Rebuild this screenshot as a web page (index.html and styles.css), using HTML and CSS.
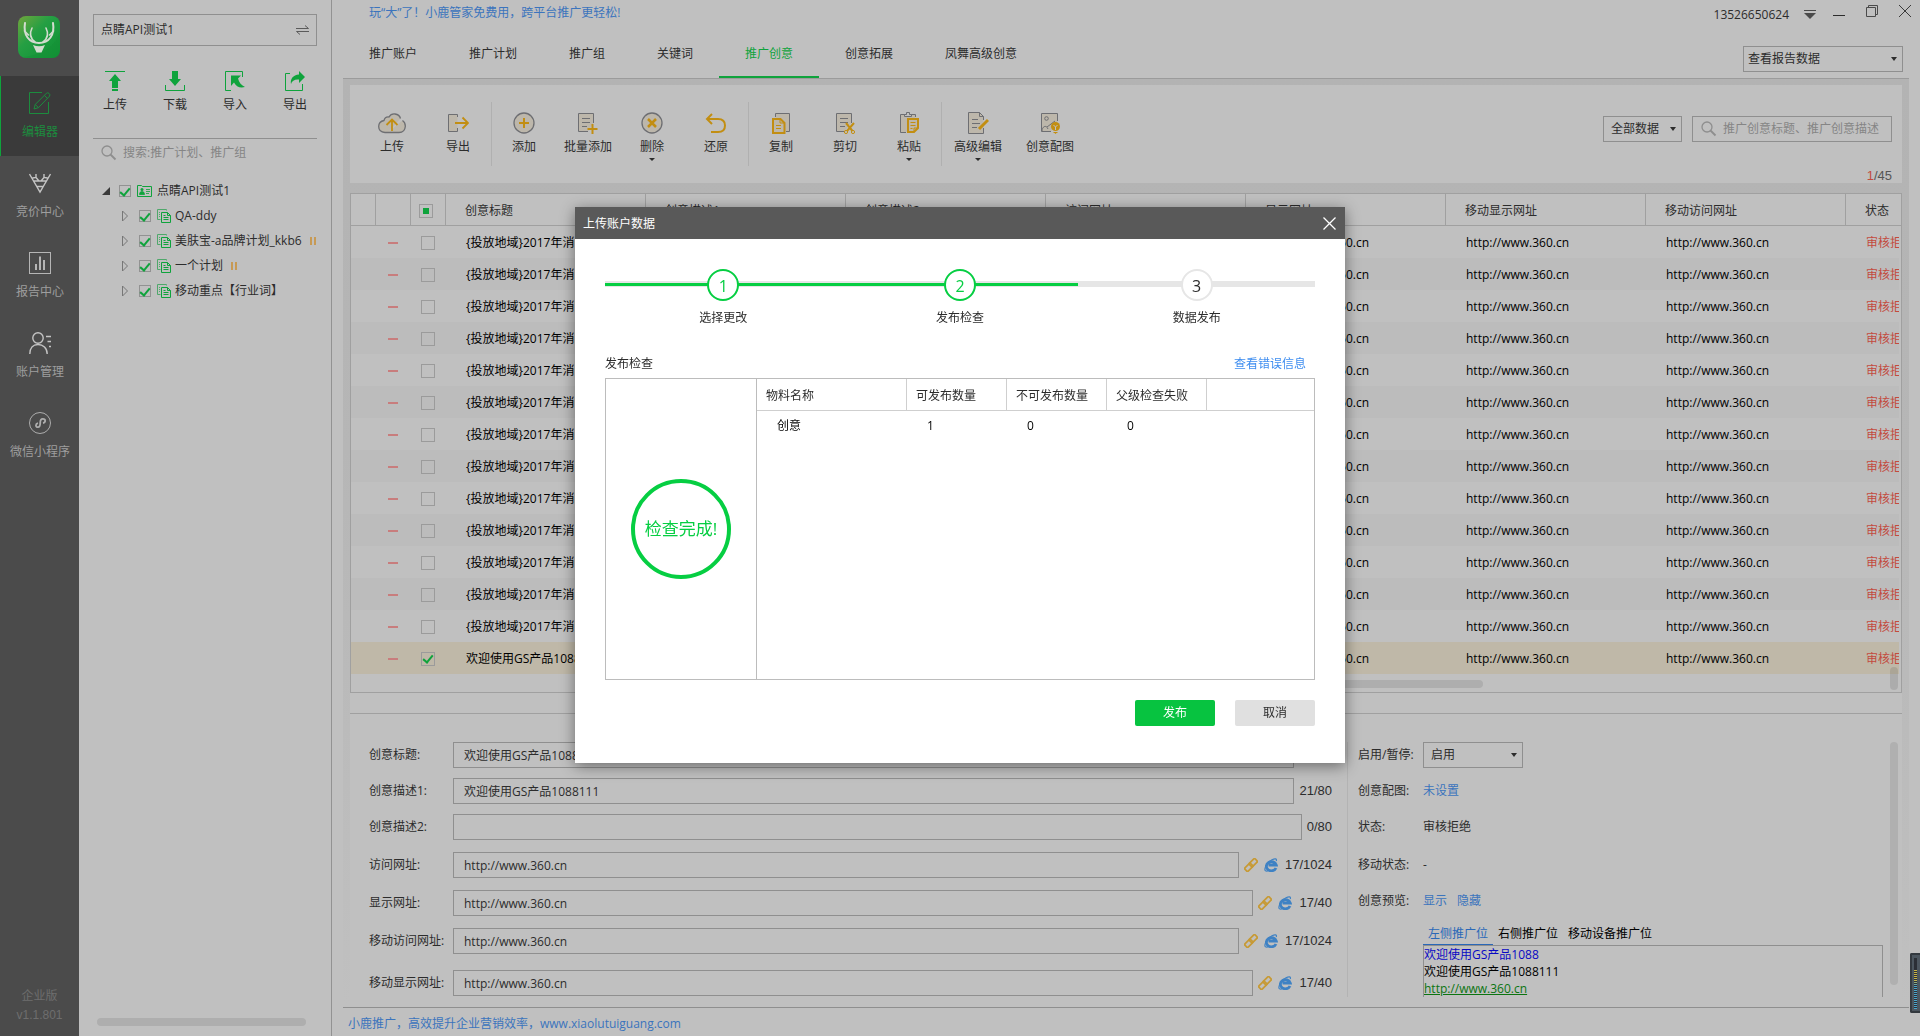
FILE: index.html
```
<!DOCTYPE html>
<html lang="zh-CN">
<head>
    <meta charset="UTF-8">
    <meta name="viewport" content="width=device-width, initial-scale=1.0">
    <title>点睛API测试1</title>
    <link rel="stylesheet" href="styles.css">
</head>
<body>
<svg class="defs" aria-hidden="true">
    <symbol id="i-plan" viewBox="0 0 14 14">
        <path d="M9.500 1.500V.5H.5v10h3" fill="none" stroke="#4fa86b"/>
        <path d="M2 3.500h1M2 5.500h1M2 7.500h1" stroke="#4fa86b"/>
        <path d="M4.500 3.500h6l3 3v7h-9z M10.500 3.500v3h3 M6.500 6.500h2 M6.500 8.500h5 M6.500 10.500h5" fill="none" stroke="#0fa33c"/>
    </symbol>
    <symbol id="i-search" viewBox="0 0 16 16">
        <circle cx="6" cy="6" r="5" fill="none" stroke="#8e8e8e" stroke-width="1.300"/>
        <path d="M9.500 9.500l5 5" stroke="#8e8e8e" stroke-width="1.800"/>
    </symbol>
    <symbol id="i-link" viewBox="0 0 14 14">
        <g fill="none" stroke="#c79a35" stroke-width="1.700">
            <rect x="-4" y="-2.300" width="8" height="4.600" rx="1" transform="translate(9.300 4.700) rotate(-45)"/>
            <rect x="-4" y="-2.300" width="8" height="4.600" rx="1" transform="translate(4.700 9.300) rotate(-45)"/>
        </g>
    </symbol>
    <symbol id="i-ie" viewBox="0 0 14 14">
        <path d="M12 10a5 4.600 0 1 1 .2-3H4.500" fill="none" stroke="#3f82c4" stroke-width="2.800"/>
        <path d="M1.500 12.800C-.5 11 3 4 8 1.700c3-1.400 5-1.200 4.300 1.300M1.500 12.800c1 .6 2.500 0 3.500-.8" fill="none" stroke="#3f82c4" stroke-width="1.200"/>
    </symbol>
</svg>

<div id="wrap">
    <!-- 左侧主导航 -->
    <nav class="side">
        <div class="logo">
            <svg width="42" height="42" viewBox="0 0 42 42">
                <defs><linearGradient id="lg" x1="0" y1="0" x2="1" y2="1"><stop offset="0" stop-color="#72a63d"/><stop offset=".4" stop-color="#259f43"/><stop offset="1" stop-color="#0b9133"/></linearGradient></defs>
                <rect width="42" height="42" rx="8" fill="url(#lg)"/>
                <path d="M42 16C36 32 25 38 6 41q2 1 4 1h24q8 0 8-8z" fill="#168f36" opacity=".5"/>
                <g fill="none" stroke="#d3dccf" stroke-width="2" stroke-linecap="round">
                    <path d="M7 7c-2 12 4 20 14 20S37 19 35 7"/>
                    <path d="M14 12c-3 6-1 11 3 14M28 12c3 6 1 11-3 14M6.500 15l4 4M35.500 15l-4 4" stroke-width="1.600"/>
                </g>
                <path d="M15 29q6 2.500 12 0l-3.500 7.500h-5z" fill="#d3dccf"/>
            </svg>
        </div>
        <ul class="side_menu">
            <li class="on"><a href="#">
                <svg width="22" height="22" viewBox="0 0 22 22" fill="none" stroke="currentColor"><path d="M13 .5H.5v21h19V10"/><path d="M5 17l1.200-4.500L17.500 1.200q1.200-1 2.500.2 1.500 1.300.6 2.700L9.500 15.600zM15.500 3.500l3 3M6.200 12.500l3.300 3.100"/></svg>
                编辑器</a></li>
            <li><a href="#">
                <svg width="22" height="22" viewBox="0 0 22 22" fill="none" stroke="#c4c4c4" stroke-width="1.400"><path d="M.5 2L11 20 21.500 2M4.500 9h13M8 14.500h6M7 2v3.500l-3.500.5M15 2v3.500l3.500.5M7 5.500L10 9M15 5.500L12 9"/></svg>
                竞价中心</a></li>
            <li><a href="#">
                <svg width="22" height="22" viewBox="0 0 22 22" fill="none" stroke="#b5b5b5"><rect x=".5" y=".5" width="21" height="21"/><path d="M7 18v-6M11 18V4.500M15 18V8" stroke="#d0d0d0" stroke-width="1.600"/></svg>
                报告中心</a></li>
            <li><a href="#">
                <svg width="22" height="22" viewBox="0 0 22 22" fill="none" stroke="#c4c4c4" stroke-width="1.400"><circle cx="9" cy="6" r="5.200"/><path d="M.8 22c0-6 3.200-9.500 8.200-9.500s9.200 3.500 9.200 9.500M17 4.500h5M18.500 9.500H22M20 14.500h2"/></svg>
                账户管理</a></li>
            <li><a href="#">
                <svg width="22" height="22" viewBox="0 0 22 22" fill="none" stroke="#adadad"><circle cx="11" cy="11" r="10.500"/><path d="M9 11.200c-2.500.4-3 4 0 4 2 0 2.200-1.700 2.200-4.200s.6-4.200 2.600-4.200c3.200 0 3 3.700.2 4.200" stroke-width="1.800"/></svg>
                微信小程序</a></li>
        </ul>
        <p class="version">企业版<br><span class="num">v1.1.801</span></p>
    </nav>

    <!-- 账户树 -->
    <aside class="account">
        <button class="account_pick" type="button">点睛API测试1
            <svg width="13" height="10" viewBox="0 0 13 10" fill="none" stroke="#5a5a5a"><path d="M0 3.500h12.500L9 .5M13 6.500H.5L4 9.500"/></svg>
        </button>
        <div class="account_btns">
            <button type="button"><svg width="20" height="20" viewBox="0 0 20 20"><path d="M0 .5h20" stroke="#0fa33c"/><path d="M10 3l6 7h-3v7H7v-7H4zM7 18h6v2H7z" fill="#0fa33c"/></svg>上传</button>
            <button type="button"><svg width="20" height="20" viewBox="0 0 20 20"><path d="M.5 14v5.500h19V14" stroke="#0fa33c" fill="none"/><path d="M7 0h6v8h3l-6 7-6-7h3z" fill="#0fa33c"/></svg>下载</button>
            <button type="button"><svg width="20" height="20" viewBox="0 0 20 20"><path d="M17.500 6V.5H.5v19H6" stroke="#0fa33c" fill="none"/><path d="M6 4.500h10l-3 3c1 4 3.500 7 7 8.500-5 1.500-9-.5-11-4.500L6 15z" fill="#0fa33c"/></svg>导入</button>
            <button type="button"><svg width="20" height="20" viewBox="0 0 20 20"><path d="M5 2.500H.5v17h17V13" stroke="#0fa33c" fill="none"/><path d="M14 0l6 6-6 6V8.500c-4-.5-7 1-8 4.500-1-5 2-9 8-9.500z" fill="#0fa33c"/></svg>导出</button>
        </div>
        <label class="account_search">
            <svg width="16" height="16"><use href="#i-search"/></svg>
            <input type="text" placeholder="搜索:推广计划、推广组">
        </label>
        <ul class="tree">
            <li>
                <svg class="arr" width="8" height="8"><path d="M8 0v8H0z" fill="#3a3a3a"/></svg>
                <input type="checkbox" id="t0" checked>
                <svg width="15" height="12" viewBox="0 0 15 12"><path d="M.5 11.500V.5h4l1 1h9v10z" fill="none" stroke="#0fa33c"/><circle cx="5" cy="4.500" r="1.500" fill="#0fa33c"/><path d="M2.500 9.500q0-3 2.500-3t2.500 3zM9 4.500h4M9 6.500h4M9 8.500h3" fill="#0fa33c" stroke="#0fa33c" stroke-width=".8"/></svg>
                <label for="t0">点睛API测试1</label>
                <ul>
                    <li><svg class="arr" width="6" height="12"><path d="M.5 1v10L5.500 6z" fill="none" stroke="#777"/></svg><input type="checkbox" id="t1" checked><svg width="14" height="14"><use href="#i-plan"/></svg><label for="t1">QA-ddy</label></li>
                    <li><svg class="arr" width="6" height="12"><path d="M.5 1v10L5.500 6z" fill="none" stroke="#777"/></svg><input type="checkbox" id="t2" checked><svg width="14" height="14"><use href="#i-plan"/></svg><label for="t2">美肤宝-a品牌计划_kkb6</label><i class="pause"></i></li>
                    <li><svg class="arr" width="6" height="12"><path d="M.5 1v10L5.500 6z" fill="none" stroke="#777"/></svg><input type="checkbox" id="t3" checked><svg width="14" height="14"><use href="#i-plan"/></svg><label for="t3">一个计划</label><i class="pause"></i></li>
                    <li><svg class="arr" width="6" height="12"><path d="M.5 1v10L5.500 6z" fill="none" stroke="#777"/></svg><input type="checkbox" id="t4" checked><svg width="14" height="14"><use href="#i-plan"/></svg><label for="t4">移动重点【行业词】</label></li>
                </ul>
            </li>
        </ul>
        <div class="account_scroll"></div>
    </aside>

    <main class="main">
        <header class="header">
            <a class="promo" href="#">玩“大”了！小鹿管家免费用，跨平台推广更轻松!</a>
            <div class="win">
                <span>13526650624</span>
                <button type="button" aria-label="菜单"><svg width="12" height="10"><path d="M0 .5h12" stroke="#4a4a4a"/><path d="M0 3h12L6 9z" fill="#4a4a4a"/></svg></button>
                <button type="button" aria-label="最小化"><svg width="12" height="12"><path d="M0 5.500h12" stroke="#2c2c2c"/></svg></button>
                <button type="button" aria-label="还原"><svg width="12" height="16" fill="none" stroke="#4a4a4a"><path d="M.5 2.500h9v9h-9zM2.500 2.500v-2h9v9h-2"/></svg></button>
                <button type="button" aria-label="关闭"><svg width="12" height="16" fill="none" stroke="#3a3a3a"><path d="M0 0l12 12M12 0L0 12"/></svg></button>
            </div>
        </header>
        <div class="tabs">
            <ul>
                <li><a href="#">推广账户</a></li>
                <li><a href="#">推广计划</a></li>
                <li><a href="#">推广组</a></li>
                <li><a href="#">关键词</a></li>
                <li class="on"><a href="#">推广创意</a></li>
                <li><a href="#">创意拓展</a></li>
                <li><a href="#">凤舞高级创意</a></li>
            </ul>
            <div class="select report">
                <select aria-label="报告"><option>查看报告数据</option></select>
            </div>
        </div>

        <div class="content">
            <div class="toolbar">
                <div class="group">
                    <button type="button"><svg width="28" height="22" viewBox="0 0 28 22" fill="none"><path d="M10 20.500H7Q.7 20 .7 14.500q0-5 5.300-6 1-4 5-3.500 2-3.500 6-3 4.500.5 5.500 4.500M24.500 8.500q3 2 2.800 6-.5 6-6.300 6H10" stroke="#6d6e72" stroke-width="1.300" fill="#bdb7ab"/><path d="M14 19V8.500M8.500 13L14 7.500l5.500 5.500" stroke="#c28e12" stroke-width="1.800"/></svg>上传</button>
                    <button type="button"><svg width="22" height="22" viewBox="0 0 22 22" fill="none"><path d="M10.500 5V2.500h-9v17h9V16" stroke="#6d6e72" fill="#bdb7ab"/><path d="M8 11h13M15.500 5.500L21 11l-5.500 5.500" stroke="#c28e12" stroke-width="1.800"/></svg>导出</button>
                </div>
                <div class="group">
                    <button type="button"><svg width="22" height="22" viewBox="0 0 22 22" fill="none"><circle cx="11" cy="11" r="10" stroke="#6d6e72" stroke-width="1.300" fill="#bdb7ab"/><path d="M11 6v10M6 11h10" stroke="#c28e12" stroke-width="2"/></svg>添加</button>
                    <button type="button"><svg width="22" height="22" viewBox="0 0 22 22" fill="none"><path d="M16.500 11V1.500h-15v18H11" stroke="#6d6e72" fill="#bdb7ab"/><path d="M5 6.500h8M5 10.500h8M5 14.500h5" stroke="#6d6e72"/><path d="M15.500 12v10M10.500 17h10" stroke="#c28e12" stroke-width="2"/></svg>批量添加</button>
                    <button class="more" type="button"><svg width="22" height="22" viewBox="0 0 22 22" fill="none"><circle cx="11" cy="11" r="10" stroke="#6d6e72" stroke-width="1.300" fill="#bdb7ab"/><path d="M7 7l8 8M15 7l-8 8" stroke="#c28e12" stroke-width="2.500"/></svg>删除</button>
                    <button type="button"><svg width="22" height="22" viewBox="0 0 22 22" fill="none"><path d="M7 2L2 7l5 5M2 7h11q7 0 7 6.500T13 20H6" stroke="#c28e12" stroke-width="2"/></svg>还原</button>
                </div>
                <div class="group">
                    <button type="button"><svg width="22" height="22" viewBox="0 0 22 22" fill="none"><path d="M5.500 5V1.500h14v18H16" stroke="#6d6e72" fill="#bdb7ab"/><path d="M3 7h7.500l4 4v10H3z" fill="#bdb7ab" stroke="#c28e12" stroke-width="2"/><path d="M10 7v4h4M6 13.500h5M6 16.500h5" stroke="#c28e12"/></svg>复制</button>
                    <button type="button"><svg width="22" height="22" viewBox="0 0 22 22" fill="none"><path d="M17.500 11V1.500h-15v18H10" stroke="#6d6e72" fill="#bdb7ab"/><path d="M6 6.500h8M6 10.500h8M6 14.500h5" stroke="#6d6e72"/><path d="M12 11l6.500 8M20 11l-7 8" stroke="#c28e12" stroke-width="2"/><circle cx="12" cy="20" r="1.600" stroke="#c28e12"/><circle cx="19" cy="20" r="1.600" stroke="#c28e12"/></svg>剪切</button>
                    <button class="more" type="button"><svg width="22" height="22" viewBox="0 0 22 22" fill="none"><path d="M17.500 5V2.500h-15v18H8" stroke="#6d6e72" fill="#bdb7ab"/><path d="M6.500 4.500v-2h2v-2h3v2h2v2z" stroke="#6d6e72" fill="#c0c0c0"/><path d="M10 7h10v9l-4 4h-6z" stroke="#c28e12" stroke-width="2" fill="#bdb7ab"/><path d="M12.500 10.500h5M12.500 13.500h5M12.500 16.500h2M16 20v-4h4" stroke="#c28e12"/></svg>粘贴</button>
                </div>
                <div class="group wide">
                    <button class="more" type="button"><svg width="22" height="22" viewBox="0 0 22 22" fill="none"><path d="M16.500 16v5.500h-15V.5h11l4 4V8" stroke="#6d6e72" fill="#bdb7ab"/><path d="M12.500.5v4h4M5 7.500h6M5 11.500h8M5 15.500h5" stroke="#6d6e72"/><path d="M12 17l9-9" stroke="#c28e12" stroke-width="3"/></svg>高级编辑</button>
                    <button type="button"><svg width="22" height="22" viewBox="0 0 22 22" fill="none"><path d="M18.500 9V1.500h-16v18H12" stroke="#6d6e72" fill="#bdb7ab"/><circle cx="7.500" cy="6.500" r="1.800" stroke="#6d6e72"/><path d="M3 19c0-4 4-7 6-2M8 15l8-6" stroke="#6d6e72"/><circle cx="16.500" cy="14.500" r="4.500" fill="#c28e12"/><path d="M14.500 20h4v1h-1l-1 1-1-1h-1z" fill="#c28e12"/><path d="M14.500 13l2 2 2-2M16.500 15v3" stroke="#c0c0c0"/></svg>创意配图</button>
                </div>
                <div class="filter">
                    <div class="filter_row">
                        <div class="select all"><select aria-label="数据范围"><option>全部数据</option></select></div>
                        <label class="search">
                            <svg width="16" height="16"><use href="#i-search"/></svg>
                            <input type="text" placeholder="推广创意标题、推广创意描述">
                        </label>
                    </div>
                    <p class="count num"><b>1</b>/45</p>
                </div>
            </div>

            <div class="grid">
                <table>
                    <colgroup>
                        <col class="c_first"><col class="c_mark"><col class="c_mark">
                        <col class="c_text"><col class="c_text"><col class="c_text"><col class="c_text"><col class="c_text"><col class="c_text"><col class="c_text">
                        <col>
                    </colgroup>
                    <thead>
                        <tr>
                            <th></th><th></th>
                            <th class="chk"><input class="part" type="checkbox" aria-label="全选"></th>
                            <th>创意标题</th><th>创意描述1</th><th>创意描述2</th><th>访问网址</th><th>显示网址</th><th>移动显示网址</th><th>移动访问网址</th><th>状态</th>
                        </tr>
                    </thead>
                    <tbody id="rows"></tbody>
                </table>
                <div class="grid_foot"><div class="bar_x"></div></div>
                <div class="bar_y"></div>
            </div>

            <div class="detail">
                <form class="fields">
                    <div class="field"><label for="f1">创意标题:</label><input id="f1" type="text" value="欢迎使用GS产品1088"><span class="num">17/50</span></div>
                    <div class="field"><label for="f2">创意描述1:</label><input id="f2" type="text" value="欢迎使用GS产品1088111"><span class="num">21/80</span></div>
                    <div class="field url"><label for="f3">创意描述2:</label><input id="f3" type="text"><span class="num">0/80</span></div>
                    <div class="field url"><label for="f4">访问网址:</label><input id="f4" type="text" value="http://www.360.cn"><svg width="14" height="14"><use href="#i-link"/></svg><svg width="14" height="14"><use href="#i-ie"/></svg><span class="num">17/1024</span></div>
                    <div class="field url"><label for="f5">显示网址:</label><input id="f5" type="text" value="http://www.360.cn"><svg width="14" height="14"><use href="#i-link"/></svg><svg width="14" height="14"><use href="#i-ie"/></svg><span class="num">17/40</span></div>
                    <div class="field url mobile"><label for="f6">移动访问网址:</label><input id="f6" type="text" value="http://www.360.cn"><svg width="14" height="14"><use href="#i-link"/></svg><svg width="14" height="14"><use href="#i-ie"/></svg><span class="num">17/1024</span></div>
                    <div class="field url mobile"><label for="f7">移动显示网址:</label><input id="f7" type="text" value="http://www.360.cn"><svg width="14" height="14"><use href="#i-link"/></svg><svg width="14" height="14"><use href="#i-ie"/></svg><span class="num">17/40</span></div>
                </form>
                <div class="info">
                    <div class="info_main">
                        <div class="field"><label for="s1">启用/暂停:</label><div class="select state"><select id="s1"><option>启用</option></select></div></div>
                        <div class="field"><span class="name">创意配图:</span><a href="#">未设置</a></div>
                        <div class="field url"><span class="name">状态:</span>审核拒绝</div>
                        <div class="field"><span class="name">移动状态:</span>-</div>
                        <div class="field"><span class="name">创意预览:</span><a href="#">显示</a><a href="#">隐藏</a></div>
                        <div class="preview">
                            <ul>
                                <li class="on">左侧推广位</li>
                                <li>右侧推广位</li>
                                <li>移动设备推广位</li>
                            </ul>
                            <div class="preview_box">
                                <p class="p_title">欢迎使用GS产品1088</p>
                                <p>欢迎使用GS产品1088111</p>
                                <p><a href="#">http://www.360.cn</a></p>
                            </div>
                        </div>
                    </div>
                    <div class="info_scroll"></div>
                </div>
            </div>
        </div>
        <footer class="footer"><a href="#">小鹿推广，高效提升企业营销效率，www.xiaolutuiguang.com</a></footer>
    </main>
</div>

<div class="meter"></div>

<!-- 上传弹窗 -->
<div class="modal_wrap">
    <section class="modal" role="dialog" aria-labelledby="m_title">
        <div class="modal_head">
            <h2 id="m_title">上传账户数据</h2>
            <button type="button" aria-label="关闭"><svg width="13" height="13" fill="none" stroke="#fff" stroke-width="1.300"><path d="M.5.5l12 12M12.500.5l-12 12"/></svg></button>
        </div>
        <div class="modal_body">
            <ol class="steps">
                <li class="done"><span>1</span>选择更改</li>
                <li class="done"><span>2</span>发布检查</li>
                <li><span>3</span>数据发布</li>
            </ol>
            <div class="check_title">发布检查<a href="#">查看错误信息</a></div>
            <div class="check">
                <div class="check_state"><div class="ring">检查完成!</div></div>
                <div class="check_list">
                    <table>
                        <colgroup><col class="c_name"><col class="c_qty"><col class="c_qty"><col class="c_qty"><col></colgroup>
                        <thead><tr><th>物料名称</th><th>可发布数量</th><th>不可发布数量</th><th>父级检查失败</th><th></th></tr></thead>
                        <tbody><tr><td>创意</td><td>1</td><td>0</td><td>0</td><td></td></tr></tbody>
                    </table>
                </div>
            </div>
            <div class="modal_btns">
                <button class="ok" type="button">发布</button>
                <button type="button">取消</button>
            </div>
        </div>
    </section>
</div>

<script>
    let rows = document.getElementById('rows')
    let total = 14
    let html = ''

    // 最后一行是当前选中的创意
    for(let i=0; i<total; i++) {
        let last = i === total - 1
        let title = last ? '欢迎使用GS产品1088' : '{投放地域}2017年消'
        html += `<tr class="${last ? 'sel' : ''}">
            <td></td>
            <td class="mark"><i></i></td>
            <td class="chk"><input type="checkbox" aria-label="选择" ${last ? 'checked' : ''}></td>
            <td>${title}</td>
            <td></td>
            <td></td>
            <td></td>
            <td>http://www.360.cn</td>
            <td>http://www.360.cn</td>
            <td>http://www.360.cn</td>
            <td class="bad">审核拒绝</td>
        </tr>`
    }
    rows.innerHTML = html
</script>
</body>
</html>
```
FILE: styles.css
```
* { box-sizing: border-box; }
body {
    margin: 0;
    background: #c0c0c0;
    color: #2c2c2c;
    font: 12px/16px "Open Sans", "Noto Sans CJK SC", sans-serif;
}
ul, ol {
    list-style: none;
    padding: 0;
    margin: 0;
}
p, h2 { margin: 0; }
a {
    color: #3b74bd;
    text-decoration: none;
}
svg {
    display: block;
    flex: none;
}
button, input, select {
    font: inherit;
    color: inherit;
}
button {
    padding: 0;
    border: 0;
    background: none;
}
input[type="text"] {
    min-width: 0;
    border: 0;
    background: none;
    outline: none;
}
input::placeholder { color: #858585; opacity: 1; }
.num { font-family: "Liberation Sans", sans-serif; font-size: 13px; }
.defs { position: absolute; width: 0; height: 0; }

/* 复选框 */
input[type="checkbox"] {
    appearance: none;
    display: grid;
    place-items: center;
    flex: none;
    width: 12px;
    height: 12px;
    margin: 0;
    border: 1px solid #929292;
}
input[type="checkbox"]:checked::after {
    content: "";
    width: 4px;
    height: 8px;
    margin-bottom: 2px;
    border: solid #0fa33c;
    border-width: 0 2px 2px 0;
    transform: rotate(40deg);
}
input.part::after {
    content: "";
    width: 6px;
    height: 6px;
    background: #0fa33c;
}

/* 下拉框 */
.select {
    position: relative;
    height: 26px;
}
.select select {
    appearance: none;
    width: 100%;
    height: 100%;
    padding: 0 4px;
    border: 1px solid #8f8f8f;
    border-radius: 0;
    background: none;
    outline: none;
}
.select::after {
    content: "";
    position: absolute;
    right: 6px;
    top: 11px;
    border: 3px solid transparent;
    border-top: 4px solid #2c2c2c;
    border-bottom: 0;
}

#wrap {
    display: flex;
    min-height: 100vh;
}

/* 主导航 */
.side {
    display: flex;
    flex-direction: column;
    flex: none;
    width: 79px;
    background: #4b4b4b;
}
.logo { padding: 16px 18px 18px; }
.side_menu a {
    display: flex;
    flex-direction: column;
    align-items: center;
    gap: 10px;
    height: 80px;
    padding-top: 16px;
    border-left: 1px solid transparent;
    color: #9e9e9e;
}
.side_menu .on a {
    background: #3a3a3a;
    border-color: #0fa33c;
    color: #1c8c3e;
}
.version {
    margin-top: auto;
    padding-bottom: 11px;
    line-height: 19px;
    text-align: center;
    color: #6e6e6e;
}
.version .num { font-size: 12px; }

/* 账户树 */
.account {
    display: flex;
    flex-direction: column;
    flex: none;
    width: 253px;
    padding: 14px 14px 10px;
    border-right: 1px solid #929292;
}
.account_pick {
    display: flex;
    justify-content: space-between;
    align-items: center;
    height: 32px;
    padding: 0 7px;
    border: 1px solid #8f8f8f;
}
.account_btns {
    display: flex;
    justify-content: space-between;
    margin: 0 -8px;
    padding: 25px 0;
}
.account_btns button {
    display: flex;
    flex-direction: column;
    align-items: center;
    gap: 6px;
    width: 60px;
}
.account_search {
    display: flex;
    align-items: center;
    gap: 6px;
    height: 28px;
    padding-left: 8px;
    border-top: 1px solid #8f8f8f;
}
.account_search input {
    flex: 1;
    padding: 0;
}
.tree {
    margin-top: 12px;
    padding-left: 9px;
    white-space: nowrap;
}
.tree > li {
    display: grid;
    grid-template-columns: 8px 17px 15px 1fr;
    align-items: center;
    column-gap: 5px;
}
.tree > li > .arr + input { margin-left: 4px; }
.tree > li > label { line-height: 25px; }
.tree ul {
    grid-column: 1 / -1;
    padding-left: 20px;
}
.tree ul li {
    display: flex;
    align-items: center;
    gap: 5px;
    height: 25px;
}
.tree ul .arr { margin-right: 6px; }
.tree ul label { margin-left: -1px; }
.tree ul input { margin-right: 1px; }
.pause {
    width: 6px;
    height: 8px;
    margin-left: 3px;
    border: solid #c79a55;
    border-width: 0 2px;
}
.account_scroll {
    height: 8px;
    margin: auto 11px 0 4px;
    border-radius: 4px;
    background: #aeaeae;
}

/* 右侧 */
.main {
    flex: 1;
    min-width: 0;
    display: flex;
    flex-direction: column;
    padding: 0 11px;
}
.header {
    display: flex;
    justify-content: space-between;
    padding: 5px 0 0 26px;
    height: 28px;
}
.win {
    display: flex;
    align-items: flex-start;
    gap: 21px;
    margin-right: -2px;
}
.win span {
    margin-right: -6px;
    line-height: 20px;
}
.win button { padding-top: 5px; }
.win button:nth-of-type(1) { margin-right: -4px; }
.win button:nth-last-child(-n+2) { padding-top: 0; }
.tabs {
    display: flex;
    justify-content: space-between;
    height: 51px;
    border-bottom: 1px solid #9b9b9b;
}
.tabs ul { display: flex; }
.tabs li a {
    display: block;
    height: 50px;
    padding: 0 26px;
    line-height: 51px;
    color: #2c2c2c;
}
.tabs .on a {
    color: #0fa33c;
    border-bottom: 2px solid #0fa33c;
}
.report {
    width: 160px;
    margin: 18px 6px 0 0;
}
.content {
    padding: 6px 7px 0;
    flex: 1;
    display: flex;
    flex-direction: column;
    background: linear-gradient(#b3b3b3, #b6b6b6 40%, #c0c0c0);
}

/* 工具栏 */
.toolbar {
    display: flex;
    align-items: center;
    height: 98px;
    margin-bottom: 10px;
    padding-left: 9px;
    background: #c0c0c0;
}
.group {
    display: flex;
    height: 64px;
    padding-top: 10px;
    border-right: 1px solid #b0b0b0;
}
.group.wide { border: 0; }
.group button {
    display: flex;
    flex-direction: column;
    align-items: center;
    gap: 5px;
    width: 64px;
}
.group:first-child button { width: 66px; }
.group.wide button { width: 72px; }
.more::after {
    content: "";
    margin-top: -2px;
    border: 3px solid transparent;
    border-top-color: #2c2c2c;
    border-bottom: 0;
}
.filter {
    align-self: flex-start;
    margin-left: auto;
    padding: 31px 10px 0 0;
}
.filter_row {
    display: flex;
    gap: 10px;
}
.all { width: 79px; }
.all select { padding-left: 7px; }
.search {
    display: flex;
    align-items: center;
    gap: 6px;
    width: 200px;
    height: 26px;
    padding-left: 8px;
    border: 1px solid #8f8f8f;
}
.search input { flex: 1; padding: 0; }
.count {
    margin-top: 26px;
    text-align: right;
    color: #555;
}
.count b {
    color: #c34a3e;
    font-weight: normal;
}

/* 创意列表 */
.grid {
    position: relative;
    border: 1px solid #a0a0a0;
    background: #c0c0c0;
}
table {
    width: 100%;
    table-layout: fixed;
    border-collapse: separate;
    border-spacing: 0;
}
th, td {
    height: 32px;
    padding: 0 0 0 20px;
    text-align: left;
    font-weight: normal;
    white-space: nowrap;
    overflow: hidden;
}
th, .grid td { padding-top: 2px; }
.grid th {
    padding-left: 19px;
    border-right: 1px solid #a0a0a0;
    border-bottom: 1px solid #a0a0a0;
}
.grid th:last-child { border-right: 0; }
.grid td { color: #000; }
.grid tbody tr:nth-child(even) { background: #bcbcbc; }
.grid tbody tr.sel:last-child { background: #bfb8a8; }
.c_first { width: 25px; }
.c_mark { width: 35px; }
.c_text { width: 200px; }
.grid .chk { padding-left: 8px; }
.grid td.chk { padding-left: 10px; }
.grid .chk input {
    width: 14px;
    height: 14px;
    border-color: #9b9b9b;
}
.grid .mark { padding-left: 12px; }
.mark i {
    display: block;
    width: 10px;
    height: 2px;
    background: #c87d7d;
}
.grid .bad {
    border-right: 2px solid #c0c0c0;
    color: #c34a3e;
}
.grid_foot {
    display: flex;
    align-items: center;
    height: 18px;
    padding-top: 2px;
}
.bar_x {
    width: 53%;
    height: 8px;
    margin-left: 20%;
    border-radius: 4px;
    background: #aeaeae;
}
.bar_y {
    position: absolute;
    right: 3px;
    bottom: 2px;
    width: 8px;
    height: 23px;
    border-radius: 4px;
    background: rgba(0, 0, 0, .1);
}

/* 创意详情 */
.detail {
    display: flex;
    flex: 1;
    padding: 49px 4px 10px 19px;
    background: linear-gradient(#a0a0a0, #a0a0a0) 0 20px / 100% 1px no-repeat #c0c0c0;
}
.fields {
    flex: 1;
    min-width: 0;
    padding-right: 15px;
}
.field {
    display: flex;
    align-items: center;
    min-height: 26px;
    margin-bottom: 10px;
}
.field.url { margin-bottom: 12px; }
.field.mobile { margin-bottom: 16px; }
.fields .mobile:last-child { margin-bottom: 0; }
.fields label { width: 84px; }
.fields input {
    flex: 1;
    height: 26px;
    padding: 0 10px;
    border: 1px solid #8f8f8f;
}
.field svg { margin-left: 5px; }
.field svg + svg { margin-left: 6px; }
.field .num { margin-left: 5px; }
.field svg + .num { margin-left: 7px; }
.info {
    display: flex;
    flex: none;
    width: 551px;
    padding-left: 10px;
    border-left: 1px solid #b3b3b3;
}
.info_main {
    flex: 1;
    height: 255px;
    overflow: hidden;
}
.info label, .info .name { width: 65px; }
.info a { margin-right: 10px; }
.info_scroll {
    width: 8px;
    height: 243px;
    margin-left: 7px;
    border-radius: 4px;
    background: #b0b0b0;
}
.state { width: 100px; }
.state select { padding-left: 7px; }
.preview {
    margin: 11px 0 0 65px;
    color: #000;
}
.preview ul { display: flex; }
.preview li {
    height: 20px;
    padding: 0 5px;
    line-height: 18px;
}
.preview .on {
    color: #2a68b8;
    border-bottom: 1px solid #2a68b8;
}
.preview_box {
    height: 60px;
    border: 1px solid #8f8f8f;
    border-bottom: 0;
    line-height: 17px;
}
.preview_box .p_title { color: #0808c4; }
.preview_box a {
    color: #0b7410;
    text-decoration: underline;
}
.footer {
    height: 29px;
    padding: 8px 5px 0;
    border-top: 1px solid #8f8f8f;
}

/* 音量条 */
.meter {
    position: fixed;
    right: 0;
    bottom: 23px;
    width: 10px;
    height: 60px;
    border: 2px solid #33393f;
    border-right: 0;
    border-radius: 2px 0 0 2px;
    background: #4c565f;
}
.meter::after {
    content: "";
    position: absolute;
    left: 2px;
    top: 3px;
    width: 3px;
    height: 51px;
    background: repeating-linear-gradient(transparent 0 1px, #2b2f36 1px 2px), linear-gradient(#2b2f36 0 12px, #c9b545 12px 22px, #4aa5c9 28px);
}

/* 弹窗 */
.modal_wrap {
    position: fixed;
    inset: 0;
    padding: 207px 20px 0;
}
.modal {
    width: 100%;
    max-width: 770px;
    margin: 0 auto;
    background: #fff;
    box-shadow: 0 3px 14px rgba(0, 0, 0, .45);
}
.modal_head {
    display: flex;
    justify-content: space-between;
    align-items: center;
    height: 32px;
    padding: 0 9px 0 8px;
    background: #595959;
    color: #fff;
}
.modal_head h2 {
    font-size: 12px;
    line-height: 16px;
    padding-top: 2px;
    font-weight: normal;
}
.modal_body { padding: 30px 30px 37px; }
.steps {
    display: flex;
    background: linear-gradient(#e6e6e6, #e6e6e6) 0 12px / 100% 6px no-repeat;
}
.steps li {
    flex: 1;
    display: flex;
    flex-direction: column;
    align-items: center;
    gap: 9px;
}
.steps span {
    width: 32px;
    height: 32px;
    border: 2px solid #e6e6e6;
    border-radius: 50%;
    background: #fff;
    line-height: 30px;
    text-align: center;
    font-size: 16px;
}
.steps .done { background: linear-gradient(#06ce42, #06ce42) 0 14px / 100% 3px no-repeat; }
.steps .done span {
    border-color: #06ce42;
    color: #06ce42;
}
.check_title {
    display: flex;
    justify-content: space-between;
    padding: 30px 9px 6px 0;
}
.check_title a { color: #3f8ef0; }
.check {
    display: flex;
    height: 302px;
    border: 1px solid #bcbcbc;
}
.check_state {
    display: grid;
    place-items: center;
    width: 151px;
    border-right: 1px solid #bcbcbc;
}
.ring {
    width: 100px;
    height: 100px;
    border: 4px solid #06ce42;
    border-radius: 50%;
    line-height: 92px;
    text-align: center;
    font-size: 17px;
    color: #06ce42;
    white-space: nowrap;
}
.check_list { flex: 1; }
.check th {
    padding-left: 9px;
    border-right: 1px solid #cfcfcf;
    border-bottom: 1px solid #cfcfcf;
}
.check th:last-child { border-right: 0; }
.check td {
    height: 30px;
    color: #000;
}
.c_name { width: 150px; }
.c_qty { width: 100px; }
.modal_btns {
    display: flex;
    justify-content: flex-end;
    gap: 20px;
    padding-top: 20px;
}
.modal_btns button {
    width: 80px;
    height: 26px;
    border-radius: 2px;
    background: #e0e0e0;
}
.modal_btns .ok {
    background: #07c340;
    color: #fff;
}
```
